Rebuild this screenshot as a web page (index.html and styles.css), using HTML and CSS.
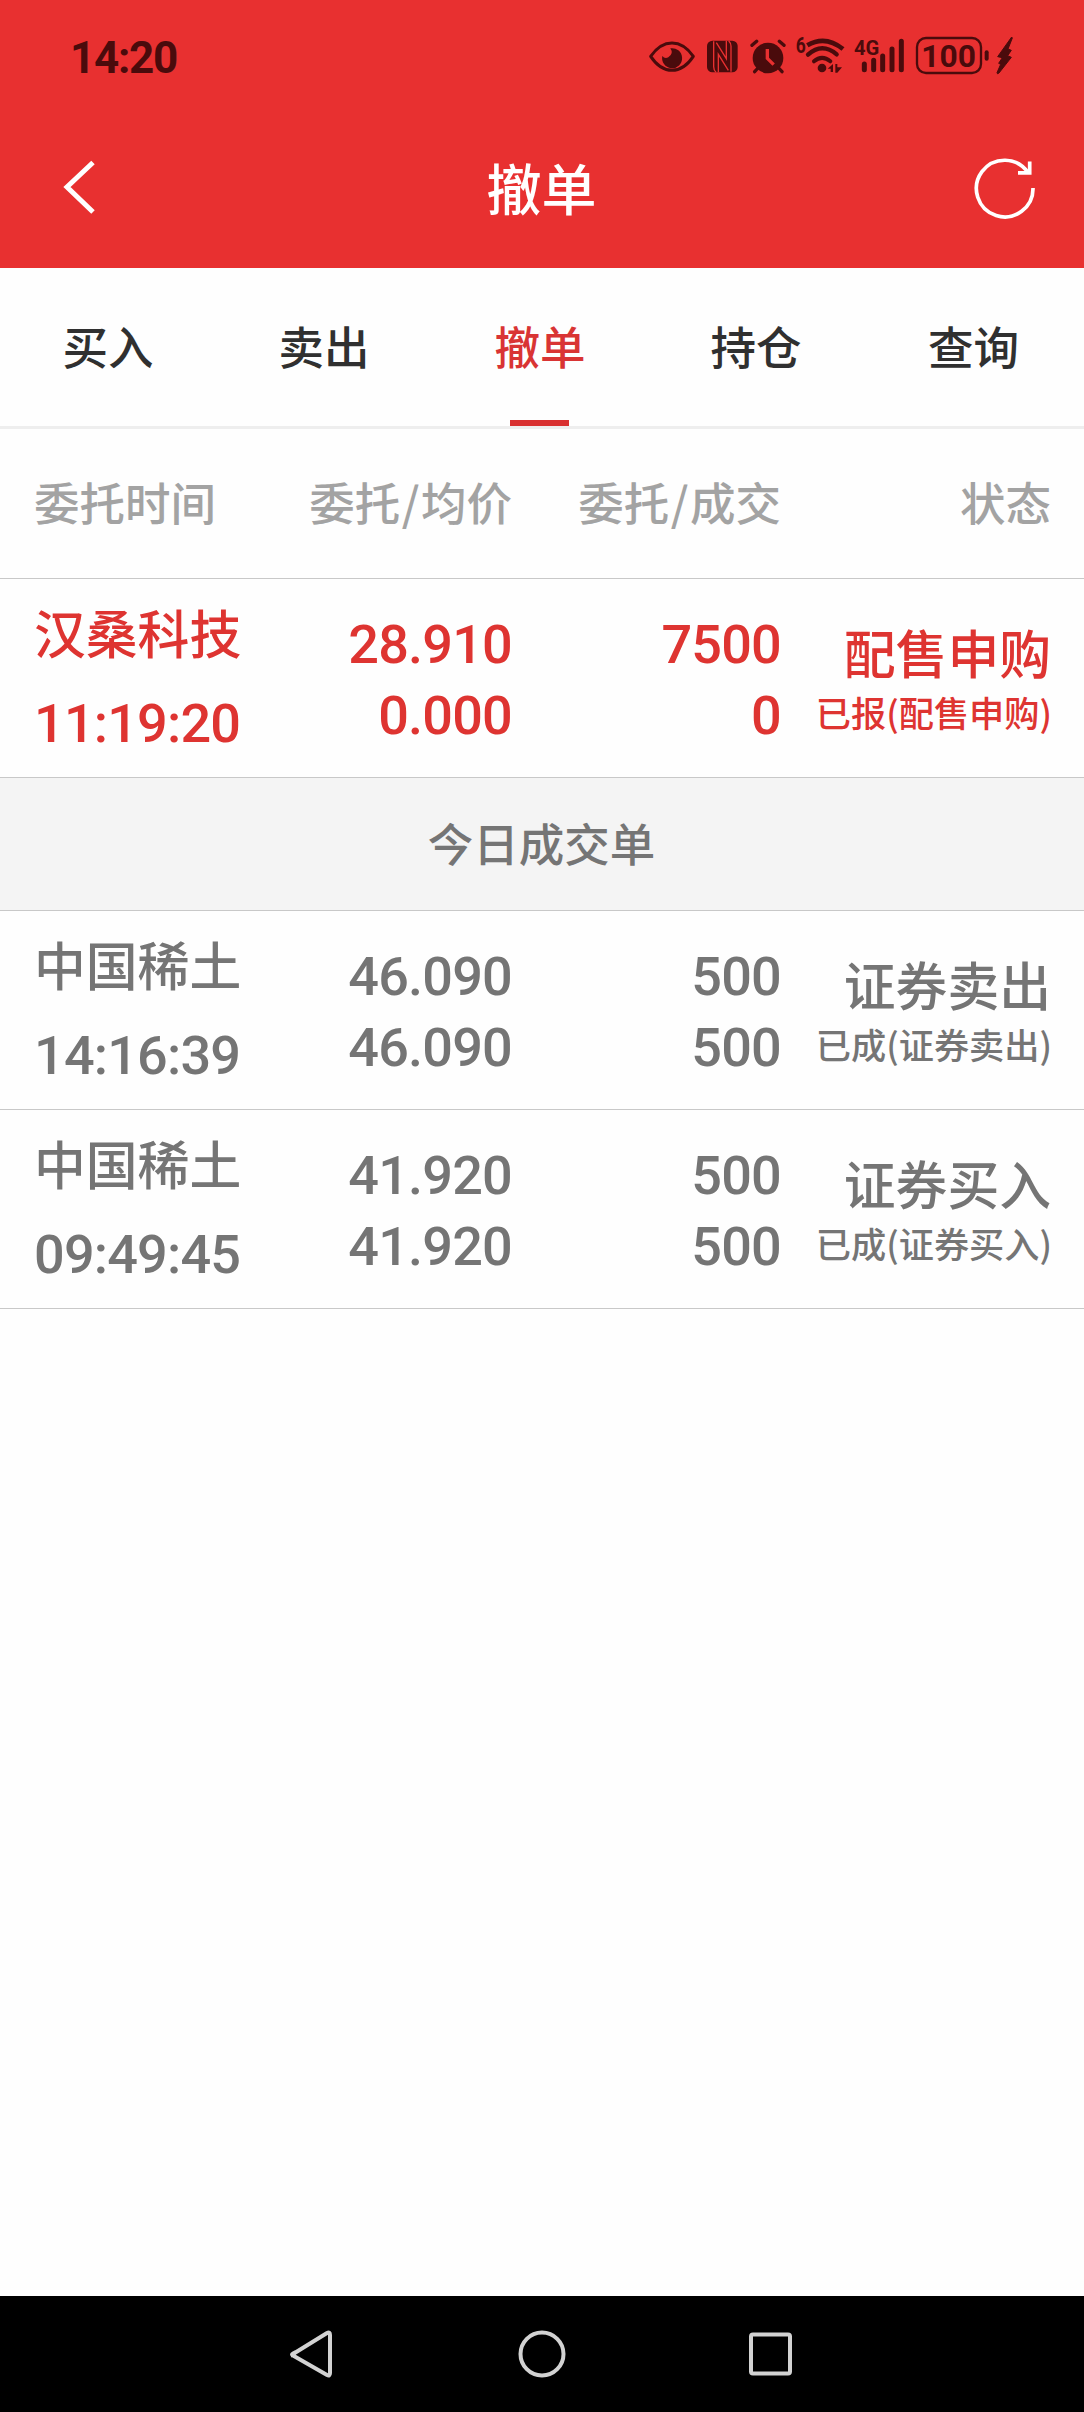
FILE: index.html
```html
<!DOCTYPE html>
<html lang="zh-CN">
<head>
<meta charset="utf-8">
<title>撤单</title>
<link rel="stylesheet" href="styles.css">
</head>
<body>
<div class="screen">
  <header class="top">
    <div class="statusbar">
      <span class="clock">14:20</span>
      <svg class="status-icons" viewBox="0 0 1200 225">
        <g fill="none" stroke="currentColor" stroke-linecap="round" stroke-linejoin="round">
          <path d="M62 109Q90 69 126 69T190 109Q162 151 126 151T62 109Z" stroke-width="9"/>
          <path d="M366 76L380 64M462 76L448 64" stroke-width="10"/>
          <path d="M384 144L374 155M446 144L456 155" stroke-width="10"/>
          <path d="M532 76Q586 44 639 87" stroke-width="14" stroke-linecap="butt"/>
          <path d="M534 104Q576 66 620 103" stroke-width="13"/>
          <path d="M552 124Q576 103 601 124" stroke-width="12"/>
          <path d="M703 132V149M731 121V149M758 108V149M786 87V149M814 64V149" stroke-width="15"/>
          <rect x="861" y="54" width="192" height="105" rx="27" stroke-width="7"/>
          <path d="M1070 97V116" stroke-width="12"/>
        </g>
        <g fill="currentColor">
          <path d="M121 85A30 30 0 1 1 97 108Q104 117 115 112Q132 101 121 85Z"/>
          <rect x="231" y="62" width="92" height="95" rx="16"/>
          <circle cx="414" cy="114" r="46"/>
          <circle cx="576" cy="144" r="13"/>
          <path d="M593 146L609 132V156H602V146ZM616 132H622V142H636L622 158H616Z"/>
          <path d="M1145 51L1103 110L1117 113L1106 130L1112 133L1101 158Q1101 164 1107 159L1144 112L1133 107L1144 91L1134 87L1147 54Z" stroke="currentColor" stroke-width="3"/>
        </g>
        <g class="cut" fill="none">
          <path d="M412 87V115L431 134" stroke-width="10"/>
          <path d="M251 64V140Q251 150 258 157M303 155V79Q303 69 296 62" stroke-width="4"/>
          <path d="M265 157V103L295 151M289 62V116L259 68" stroke-width="4"/>
        </g>
        <g class="glyphs" fill="currentColor">
          <text x="497" y="99" font-size="64" textLength="30" lengthAdjust="spacingAndGlyphs">6</text>
          <text x="672" y="104" font-size="62" textLength="76" lengthAdjust="spacingAndGlyphs">4G</text>
          <text x="874" y="140" font-size="94" textLength="164" lengthAdjust="spacingAndGlyphs">100</text>
        </g>
      </svg>
    </div>
    <div class="titlebar">
      <svg class="back" viewBox="0 0 40 60"><path d="M33 5.500L7 30L33 55"/></svg>
      <h1 class="title">撤单</h1>
      <svg class="refresh" viewBox="0 0 64 64"><path d="M60 32A28.300 28.300 0 1 1 55 16.500M56.700 5.500V16.800H45"/></svg>
    </div>
  </header>

  <nav class="tabs">
    <span class="tab">买入</span>
    <span class="tab">卖出</span>
    <span class="tab tab-active">撤单</span>
    <span class="tab">持仓</span>
    <span class="tab">查询</span>
  </nav>

  <main class="orders">
    <div class="grid heads">
      <span>委托时间</span><span>委托<i class="slash">/</i>均价</span><span>委托<i class="slash">/</i>成交</span><span>状态</span>
    </div>

    <div class="grid order pending">
      <div class="stock"><div class="name">汉桑科技</div><div class="time">11:19:20</div></div>
      <div class="nums"><div>28.910</div><div>0.000</div></div>
      <div class="nums"><div>7500</div><div>0</div></div>
      <div class="state"><div class="kind">配售申购</div><div class="detail">已报(配售申购)</div></div>
    </div>

    <h2 class="section">今日成交单</h2>

    <div class="grid order">
      <div class="stock"><div class="name">中国稀土</div><div class="time">14:16:39</div></div>
      <div class="nums"><div>46.090</div><div>46.090</div></div>
      <div class="nums"><div>500</div><div>500</div></div>
      <div class="state"><div class="kind">证券卖出</div><div class="detail">已成(证券卖出)</div></div>
    </div>

    <div class="grid order">
      <div class="stock"><div class="name">中国稀土</div><div class="time">09:49:45</div></div>
      <div class="nums"><div>41.920</div><div>41.920</div></div>
      <div class="nums"><div>500</div><div>500</div></div>
      <div class="state"><div class="kind">证券买入</div><div class="detail">已成(证券买入)</div></div>
    </div>
  </main>

  <footer class="navbar">
    <svg viewBox="0 0 60 60"><path d="M10 30L44 9Q47 7.500 47 11V49Q47 52.500 44 51L10 31.500Q8 30.500 10 29.500Z"/></svg>
    <svg viewBox="0 0 60 60"><circle cx="30" cy="30" r="21.500"/></svg>
    <svg viewBox="0 0 60 60"><rect x="10" y="10.500" width="39" height="39" rx="2"/></svg>
  </footer>
</div>
</body>
</html>
```

FILE: styles.css
```css
* { box-sizing: border-box; }

body {
  margin: 0;
  background: #fefefe;
  color: #757575;
  font-family: "Noto Sans CJK SC", sans-serif;
  font-weight: 500;
}

.screen {
  width: 1084px;
  height: 2412px;
  display: flex;
  flex-direction: column;
}

.top { height: 268px; background: #e83030; }

.statusbar {
  height: 114px;
  display: flex;
  justify-content: space-between;
  align-items: center;
  padding: 0 54px 0 70px;
  color: #4a0b0c;
}

.clock {
  padding-top: 2px;
  font: 700 44px/52px Roboto, sans-serif;
  letter-spacing: -1.3px;
}

.status-icons { width: 400px; height: 75px; }
.cut { stroke: #e83030; }
.glyphs { font-family: Roboto, sans-serif; font-weight: 700; }

.titlebar {
  height: 145px;
  display: grid;
  grid-template-columns: 1fr auto 1fr;
  align-items: center;
  padding: 0 47px 0 60px;
  color: #fff;
}

.title { margin: 0 0 1px -14px; font-size: 55px; font-weight: 500; line-height: 70px; }
.back { width: 40px; height: 60px; }
.refresh { width: 64px; height: 64px; margin-top: 2px; justify-self: end; }
.back path, .refresh path { fill: none; stroke: currentColor; }
.back path { stroke-width: 5; }
.refresh path { stroke-width: 3.7; }

.tabs {
  height: 161px;
  display: grid;
  grid-template-columns: repeat(5, 216px);
  border-bottom: 3px solid #eee;
}

.tab {
  display: flex;
  flex-direction: column;
  align-items: center;
  padding-top: 47px;
  font-size: 45.500px;
  line-height: 60px;
  color: #303030;
}

.tab:last-child { padding-left: 3px; }

.tab-active { color: #d93434; }
.tab-active::after {
  content: "";
  width: 59px;
  height: 6px;
  margin: 45px 1px 0 0;
  background: #d93030;
}

.orders { flex: 1; }

.grid {
  display: grid;
  grid-template-columns: 260px 218px 269px 270px;
  padding: 0 33px 0 34px;
  border-bottom: 1px solid #c8c8c8;
}

.grid > :nth-child(n + 2) { text-align: right; }

.heads {
  height: 150px;
  padding-top: 42px;
  font-size: 45.500px;
  line-height: 60px;
  color: #a3a3a3;
}

.slash { padding: 0 1.500px; font-style: normal; }

.order { height: 199px; }
.pending { color: #de3431; }

.stock { padding-top: 23px; }
.name, .kind { font-size: 51.800px; line-height: 60px; }
.time, .nums {
  font-family: Roboto, sans-serif;
  font-size: 54px;
  letter-spacing: -0.800px;
}
.time { margin-top: 27px; line-height: 70px; }
.nums { padding-top: 30px; line-height: 71px; }
.state { padding-top: 43px; white-space: nowrap; }
.detail { margin: 5px -1px 0 0; font-size: 35.200px; line-height: 50px; }

.section {
  height: 133px;
  margin: 0;
  padding: 34px 1px 0 0;
  border-bottom: 1px solid #c8c8c8;
  background: #f4f4f4;
  font-size: 45.500px;
  font-weight: 500;
  line-height: 60px;
  text-align: center;
}

.navbar {
  height: 116px;
  display: flex;
  justify-content: center;
  align-items: center;
  gap: 169px;
  background: #000;
}

.navbar svg {
  width: 60px;
  height: 60px;
  fill: none;
  stroke: #d2d2d2;
  stroke-width: 4;
}
```
